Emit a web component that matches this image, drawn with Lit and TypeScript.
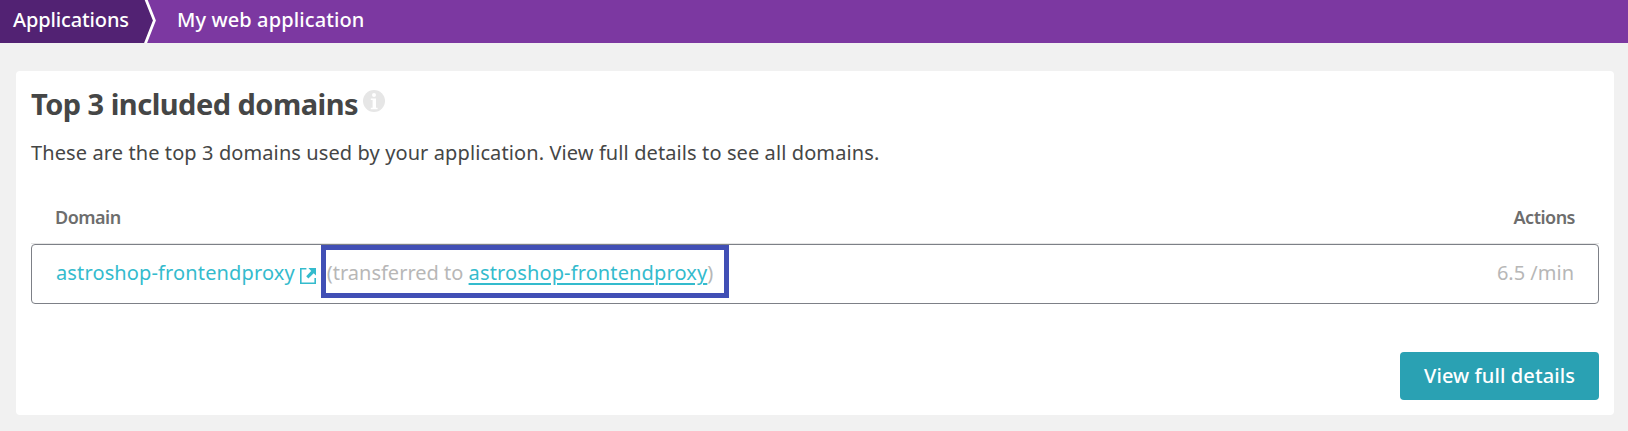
import { LitElement, html, css } from "lit";
import { customElement } from "lit/decorators.js";

const infoIcon = html`<svg class="info" viewBox="0 0 22 22" width="22" height="22">
  <circle cx="11" cy="11" r="11" fill="#e6e6e6" />
  <circle cx="11" cy="5" r="2" fill="#fff" />
  <path d="M7.8 8.6H13V17.8H14.6V19.2H7.8V17.8H9.6V10H7.8Z" fill="#fff" />
</svg>`;

const externalIcon = html`<svg class="external" viewBox="0 0 16 16" width="16" height="16">
  <path d="M6.4 .8H.8V15.2H15.2V10" fill="none" stroke="currentColor" stroke-width="1.6" />
  <path d="M8.4 0H16V7.6L13.7 5.3L8.4 10.4L6.2 8.3L11.2 3Z" fill="currentColor" />
</svg>`;

@customElement("app-breadcrumbs")
class AppBreadcrumbs extends LitElement {
  static styles = css`
    :host { display: block; }
    .bar { display: flex; height: 43px; background: #7c38a1; color: #fff; font-size: 20px; line-height: 40px; font-weight: 500; }
    .parent { box-sizing: border-box; width: 144px; padding-left: 13px; background: #522273; white-space: nowrap; letter-spacing: -0.13px; }
    .arrow { display: block; flex: none; width: 14px; height: 43px; }
    .current { padding-left: 19px; white-space: nowrap; letter-spacing: 0.11px; }
  `;
  render() {
    return html`<nav class="bar">
      <span class="parent">Applications</span>
      <svg class="arrow" viewBox="0 0 14 43">
        <path d="M0 0H2L10.5 20.5L1 43H0Z" fill="#522273" />
        <path d="M1.8 -1L10.4 20.5L1.2 44" fill="none" stroke="#fff" stroke-width="2.8" />
      </svg>
      <span class="current">My web application</span>
    </nav>`;
  }
}

@customElement("app-root")
class AppRoot extends LitElement {
  static styles = css`
    :host { display: block; height: 431px; background: #f1f1f1; font-family: "Noto Sans", "Open Sans", sans-serif; color: #454646; overflow: hidden; }
    .card { box-sizing: border-box; margin: 28px 14px 0 16px; height: 344px; padding: 0 15px; background: #fff; border-radius: 4px; }
    .heading { display: flex; align-items: flex-start; height: 60px; }
    .title { margin: 0; padding-top: 13px; font-size: 29px; line-height: 40px; font-weight: 700; white-space: nowrap; letter-spacing: -0.52px; }
    .info { margin: 19px 0 0 5px; }
    .description { margin: 0; padding-top: 7px; height: 49px; font-size: 20px; line-height: 30px; white-space: nowrap; letter-spacing: 0.1px; }
    .columns { display: flex; justify-content: space-between; padding: 19px 24px 0; height: 37px; border-bottom: 1px solid #e6e6e6; font-size: 18px; line-height: 23px; font-weight: 600; color: #6d6d6d; letter-spacing: -0.5px; }
    .row { box-sizing: border-box; display: flex; align-items: flex-start; height: 60px; border: 1px solid #7d8087; border-radius: 4px; padding: 0 24px; font-size: 20px; line-height: 56px; color: #b7b7b7; white-space: nowrap; }
    .link { color: #34bbcd; text-decoration: none; letter-spacing: 0.13px; }
    .external { margin: 23px 5px 0 5px; color: #34bbcd; flex: none; }
    .highlight { box-sizing: border-box; width: 408px; height: 53px; border: 5px solid #414fb5; line-height: 46px; padding-left: 1px; }
    .underlined { text-decoration: underline; text-decoration-thickness: 2px; text-underline-offset: 3px; }
    .rate { margin-left: auto; }
    .footer { display: flex; justify-content: flex-end; padding-top: 48px; }
    .button { width: 199px; height: 48px; border: 0; border-radius: 4px; padding: 0 0 2px; background: #2aa1b3; color: #fff; font-family: inherit; font-size: 20px; font-weight: 500; white-space: nowrap; letter-spacing: 0.1px; }
  `;
  render() {
    return html`
      <app-breadcrumbs></app-breadcrumbs>
      <main class="card">
        <div class="heading"><h1 class="title">Top 3 included domains</h1>${infoIcon}</div>
        <p class="description">These are the top 3 domains used by your application. View full details to see all domains.</p>
        <div class="columns"><span>Domain</span><span>Actions</span></div>
        <div class="row">
          <a class="link">astroshop-frontendproxy</a>${externalIcon}
          <div class="highlight">(transferred to <a class="link underlined">astroshop-frontendproxy</a>)</div>
          <span class="rate">6.5 /min</span>
        </div>
        <div class="footer"><button class="button">View full details</button></div>
      </main>`;
  }
}
